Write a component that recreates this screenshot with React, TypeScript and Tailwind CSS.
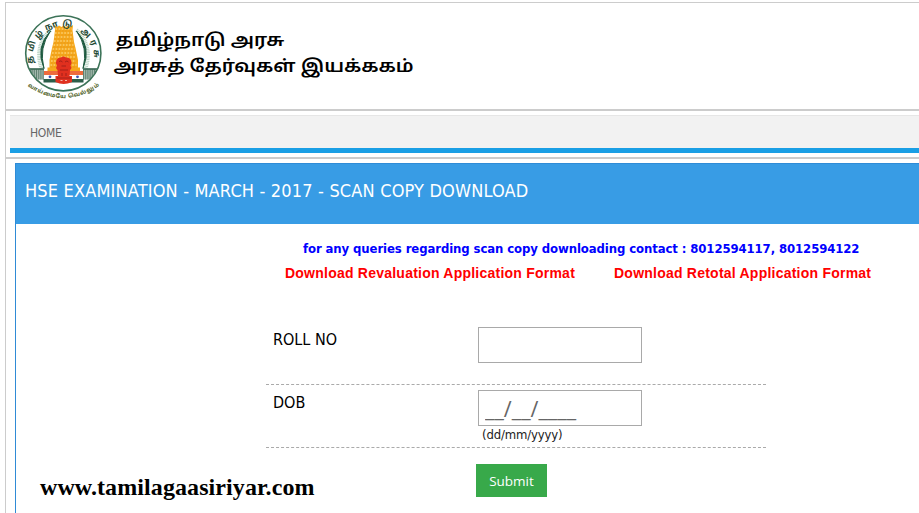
const TEMPLE_TIERS = [
  { x: 55.5, y: 29, w: 16 },
  { x: 55, y: 33, w: 17 },
  { x: 54.5, y: 37, w: 18 },
  { x: 54, y: 41, w: 19 },
  { x: 53.5, y: 45, w: 20 },
  { x: 52.5, y: 49, w: 22 },
  { x: 52, y: 53, w: 23 },
  { x: 51.5, y: 57, w: 24 },
  { x: 51, y: 61, w: 25 },
  { x: 50.5, y: 65, w: 26 },
];

function Emblem() {
  return (
    <svg viewBox="20 10 90 92" className="h-[92px] w-[90px] shrink-0">
      <defs>
        <path id="ring" d="M33.2 63.5 A30.8 30.8 0 1 1 93.4 63.5" />
        <path id="motto" d="M27.5 86 Q63 110 99 86" />
        <clipPath id="disc">
          <circle cx="63.3" cy="53.3" r="37" />
        </clipPath>
      </defs>
      <circle cx="63.3" cy="53.3" r="37.6" fill="#fff" />
      <path d="M50.5 30 Q34 46 41.5 68.5" fill="none" stroke="#b9d3c4" strokeWidth="4" strokeDasharray="1 .7" />
      <path d="M76.5 30 Q93 46 85.5 68.5" fill="none" stroke="#b9d3c4" strokeWidth="4" strokeDasharray="1 .7" />
      <path d="M50.5 31 Q35 47 44 68.5 Q38.5 48 50.5 31 Z" fill="#1f5a40" stroke="#1f5a40" strokeWidth="1" />
      <path d="M76.5 31 Q92 47 83 68.5 Q88.5 48 76.5 31 Z" fill="#1f5a40" stroke="#1f5a40" strokeWidth="1" />

      <g clipPath="url(#disc)">
        <path d="M24 68.7 H44 V79.5 H24 Z M83 68.7 H103 V79.5 H83 Z" fill="#a3b8ad" />
        <path d="M25 74.5 H44 M83 74.5 H102" stroke="#5f8271" strokeWidth="10" strokeDasharray="1 1.2" />
        <path d="M25 69 H44 M83 69 H102" stroke="#2c5e49" strokeWidth="1.4" />
      </g>
      <circle cx="63.3" cy="53.3" r="37.6" fill="none" stroke="#3c7358" strokeWidth="1.6" />
      <path d="M44 71 H83 V75 H44 Z" fill="#ee6b3c" />
      <path d="M44 75 H83 V79 H44 Z" fill="#fff" />
      <path d="M43.5 79 H83.5 V82.5 H43.5 Z" fill="#2c5e49" />
      <circle cx="50" cy="76.8" r="1.4" fill="#3b52b0" />
      <circle cx="77.5" cy="76.8" r="1.4" fill="#3b52b0" />

      <path
        d="M54.5 25 L57 27 L59 25.5 L61.5 27 L63.5 25.5 L66 27 L68 25.5 L70 27 L73 25 L72.5 30 L74 42 L75.5 48 L78 60 V67.5 H80 V71 H47.5 V67.5 H49.5 V60 L52 48 L53.5 42 L55 30 Z"
        fill="#f6a81c"
      />
      {TEMPLE_TIERS.map((t) => (
        <g key={t.y}>
          <path d={`M${t.x} ${t.y} h${t.w}`} stroke="#fde6a6" strokeWidth=".9" strokeDasharray="1.6 1.5" />
          <path d={`M${t.x} ${t.y + 2} h${t.w}`} stroke="#e39316" strokeWidth=".7" strokeDasharray="2.2 1" />
        </g>
      ))}

      <path
        d="M56.5 60 Q58 57 61 57.5 Q63.5 55.5 66 57.5 Q69.5 57 71 60 Q72.5 63 70.5 66 Q72.5 68 70 70 L69.5 76 H72 V82 Q63.5 86 55.5 82 V76 H58 L57.5 70 Q55 68 57 66 Q55 63 56.5 60 Z"
        fill="#e0301f"
      />
      <path
        d="M59 61.5 q2 -1.5 3.5 .5 M65 62 q2 -2 3.5 0 M61.5 66 h4.5 M60 70 h8 M62 73 v3 M66 73 v3 M57 78 h14"
        fill="none"
        stroke="#9c2018"
        strokeWidth=".9"
      />
      <path d="M60.5 80.5 h2 M65 80.5 h2" stroke="#f5b5a8" strokeWidth="1" />

      <text className="font-[Noto_Sans_Tamil,Noto_Sans,sans-serif] font-bold" fontSize="8.5" fill="#1f4a35">
        <textPath href="#ring" textLength="104">தமிழ்நாடு அரசு</textPath>
      </text>
      <text className="font-[Noto_Sans_Tamil,Noto_Sans,sans-serif] font-bold" fontSize="5.6" fill="#4d5e25">
        <textPath href="#motto" textLength="77">வாய்மையே வெல்லும்</textPath>
      </text>
    </svg>
  );
}

export default function App() {
  return (
    <div className="h-[513px] w-[919px] overflow-hidden bg-white pt-[2px] pl-[5px] font-[DejaVu_Sans_Condensed,DejaVu_Sans,sans-serif] text-black">
      <div className="h-[511px] border-t border-l border-[#ccc]">
        <header className="flex h-[108px] border-b-2 border-[#ccc] pt-[7px] pl-[14px]">
          <Emblem />
          <div className="origin-left scale-x-[1.155] pt-[19px] pl-[3px] font-[Noto_Sans_Tamil,Noto_Sans,sans-serif] text-[17px] leading-[26px] font-semibold whitespace-nowrap">
            <div className="pl-[2px]">தமிழ்நாடு அரசு</div>
            <div>அரசுத் தேர்வுகள் இயக்ககம்</div>
          </div>
        </header>

        <nav className="h-[48px] border-b-2 border-[#ccc] pt-[4px] pl-[4px]">
          <div className="flex h-[38px] items-center border-t border-b-[5px] border-t-[#e6e6e6] border-b-[#1a9fe5] bg-[#f2f2f2] pt-[2px] pl-[20px]">
            <a className="text-[12px] tracking-[-0.3px] text-[#666]">HOME</a>
          </div>
        </nav>

        <main className="mt-[4px] ml-[9px] h-[350px] border-t border-l border-[#2f8bd6]">
          <h1 className="flex h-[60px] items-center bg-[#389ce5] pb-[7px] pl-[9px] text-[18px] tracking-[0.17px] whitespace-nowrap text-white">
            HSE EXAMINATION - MARCH - 2017 - SCAN COPY DOWNLOAD
          </h1>

          <div className="pt-[16px] pl-[287px] text-[13px] leading-[18px] font-bold tracking-[-0.1px] whitespace-nowrap text-[#00f]">
            for any queries regarding scan copy downloading contact : 8012594117, 8012594122
          </div>
          <div className="flex gap-[39px] pt-[6px] pl-[269px] font-[Liberation_Sans,Arial,sans-serif] text-[14px] leading-[18px] font-bold tracking-[0.23px] whitespace-nowrap text-[#f00]">
            <a>Download Revaluation Application Format</a>
            <a>Download Retotal Application Format</a>
          </div>

          <form className="mt-[45px] ml-[250px] w-[500px]">
            <div className="flex h-[58px] border-b border-dashed border-[#aaa] pl-[7px]">
              <label className="w-[205px] pt-[3px] text-[16px] leading-[20px]">ROLL NO</label>
              <input className="h-[36px] w-[164px] border border-[#a9a9a9] px-[7px]" />
            </div>
            <div className="flex h-[63px] border-b border-dashed border-[#aaa] pt-[5px] pl-[7px]">
              <label className="w-[205px] pt-[3px] text-[16px] leading-[20px]">DOB</label>
              <div>
                <input
                  className="block h-[36px] w-[164px] border border-[#a9a9a9] px-[6px] font-[Open_Sans,sans-serif] text-[21.5px] text-[#666]"
                  defaultValue="__/__/____"
                />
                <div className="pl-[4px] text-[13px] leading-[17px] tracking-[-0.15px] text-[#222]">(dd/mm/yyyy)</div>
              </div>
            </div>
          </form>
          <div className="flex items-start pt-[16px] pl-[24px]">
            <div className="w-[436px] pt-[8px] font-[Liberation_Serif,serif] text-[24px] leading-[30px] font-bold tracking-[0.09px]">
              www.tamilagaasiriyar.com
            </div>
            <button className="h-[33px] w-[71px] bg-[#38a94a] pt-[2px] font-[Open_Sans,sans-serif] text-[13.5px] text-white">
              Submit
            </button>
          </div>
        </main>
      </div>
    </div>
  );
}
